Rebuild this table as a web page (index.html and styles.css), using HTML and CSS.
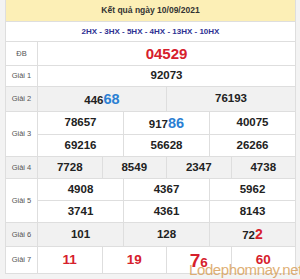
FILE: index.html
```html
<!DOCTYPE html>
<html lang="vi">
<head>
    <meta charset="UTF-8">
    <meta name="viewport" content="width=device-width, initial-scale=1.0">
    <title>Kết quả ngày 10/09/2021</title>
    <link rel="stylesheet" href="styles.css">
</head>
<body>
    <div class="wrap">
        <table class="kq">
            <colgroup>
                <col class="col-lbl">
                <col span="12">
            </colgroup>
            <tr class="r-head"><td colspan="13">Kết quả ngày 10/09/2021</td></tr>
            <tr class="r-code"><td colspan="13">2HX - 3HX - 5HX - 4HX - 13HX - 10HX</td></tr>
            <tr class="r-db">
                <td class="lbl">ĐB</td>
                <td colspan="12" class="db">04529</td>
            </tr>
            <tr class="r-g1">
                <td class="lbl">Giải 1</td>
                <td colspan="12">92073</td>
            </tr>
            <tr class="r-g2 alt">
                <td class="lbl">Giải 2</td>
                <td colspan="6">446<span class="hl">68</span></td>
                <td colspan="6">76193</td>
            </tr>
            <tr class="r-g3a">
                <td class="lbl" rowspan="2">Giải 3</td>
                <td colspan="4">78657</td>
                <td colspan="4">917<span class="hl">86</span></td>
                <td colspan="4">40075</td>
            </tr>
            <tr class="r-g3b">
                <td colspan="4">69216</td>
                <td colspan="4">56628</td>
                <td colspan="4">26266</td>
            </tr>
            <tr class="r-g4 alt">
                <td class="lbl">Giải 4</td>
                <td colspan="3">7728</td>
                <td colspan="3">8549</td>
                <td colspan="3">2347</td>
                <td colspan="3">4738</td>
            </tr>
            <tr class="r-g5a">
                <td class="lbl" rowspan="2">Giải 5</td>
                <td colspan="4">4908</td>
                <td colspan="4">4367</td>
                <td colspan="4">5962</td>
            </tr>
            <tr class="r-g5b">
                <td colspan="4">3741</td>
                <td colspan="4">4361</td>
                <td colspan="4">8143</td>
            </tr>
            <tr class="r-g6 alt">
                <td class="lbl">Giải 6</td>
                <td colspan="4">101</td>
                <td colspan="4">128</td>
                <td colspan="4">72<span class="red">2</span></td>
            </tr>
            <tr class="r-g7">
                <td class="lbl">Giải 7</td>
                <td colspan="3" class="g7">11</td>
                <td colspan="3" class="g7">19</td>
                <td colspan="3" class="g7"><span class="big">7</span>6</td>
                <td colspan="3" class="g7">60</td>
            </tr>
        </table>
        <div class="mark">Lodephomnay.net</div>
    </div>
</body>
</html>
```

FILE: styles.css
```css
body { margin: 0; background: #f3f3f3; font-family: "Liberation Sans", Arial, sans-serif; color: #222; }
.wrap { position: relative; width: 300px; height: 279px; overflow: hidden; padding-left: 5px; box-sizing: border-box; }
.kq { width: 291px; border-collapse: collapse; table-layout: fixed; background: #fff; }
.col-lbl { width: 32px; }
.kq td { border: 1px solid #dedede; padding: 0; text-align: center; font-size: 11.5px; font-weight: bold; line-height: 1; white-space: nowrap; }
.kq .alt td { background: #f1f1f1; }
.r-head td { height: 21px; background: #fcefb6; color: #333; font-size: 8.5px; border-top: 0; }
.r-code td { height: 19px; color: #2e3192; font-size: 8px; }
.r-db td { height: 23px; }
.r-g1 td { height: 20px; }
.r-g2 td { height: 24px; }
.r-g3a td, .r-g3b td { height: 22px; }
.r-g3b td { height: 21px; }
.r-g4 td { height: 21px; }
.r-g5a td, .r-g5b td { height: 21px; }
.r-g6 td { height: 23px; }
.r-g7 td { height: 26px; }
.kq td.lbl { font-size: 7.5px; font-weight: normal; color: #555; }
.db { color: #d6202c; font-size: 15px !important; }
.hl { color: #2b7fd3; font-size: 14.5px; }
.red { color: #d6202c; font-size: 14px; }
.g7 { color: #d6202c; font-size: 13.5px !important; }
.big { font-size: 19px; }
.mark { position: absolute; right: -2px; bottom: 1px; font-size: 15px; letter-spacing: -0.4px; color: #d9a25c; opacity: 0.85; }
```
